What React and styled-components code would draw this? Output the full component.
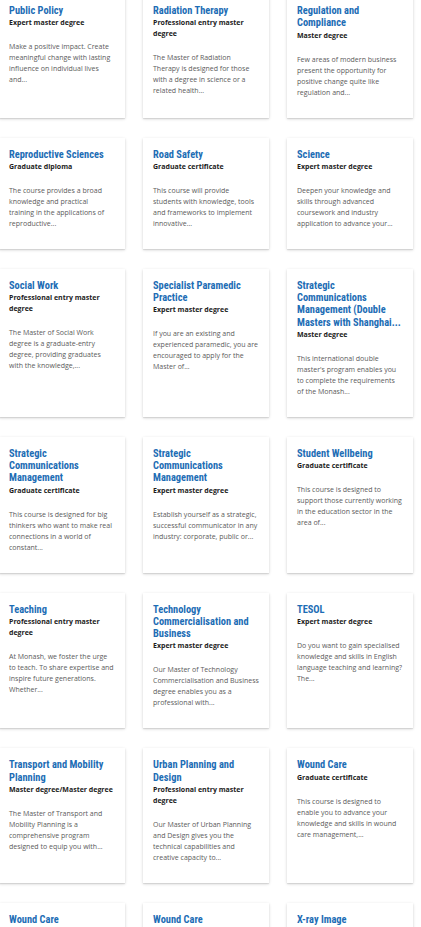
import React from 'react';
import styled, { createGlobalStyle } from 'styled-components';

const courses = [
  { title: 'Public Policy', type: 'Expert master degree', text: 'Make a positive impact. Create meaningful change with lasting influence on individual lives and...' },
  { title: 'Radiation Therapy', type: 'Professional entry master degree', text: 'The Master of Radiation Therapy is designed for those with a degree in science or a related health...' },
  { title: 'Regulation and Compliance', type: 'Master degree', text: 'Few areas of modern business present the opportunity for positive change quite like regulation and...' },
  { title: 'Reproductive Sciences', type: 'Graduate diploma', text: 'The course provides a broad knowledge and practical training in the applications of reproductive...' },
  { title: 'Road Safety', type: 'Graduate certificate', text: 'This course will provide students with knowledge, tools and frameworks to implement innovative...' },
  { title: 'Science', type: 'Expert master degree', text: 'Deepen your knowledge and skills through advanced coursework and industry application to advance your...' },
  { title: 'Social Work', type: 'Professional entry master degree', text: 'The Master of Social Work degree is a graduate-entry degree, providing graduates with the knowledge,...' },
  { title: 'Specialist Paramedic Practice', type: 'Expert master degree', text: 'If you are an existing and experienced paramedic, you are encouraged to apply for the Master of...' },
  { title: 'Strategic Communications Management (Double Masters with Shanghai...', type: 'Master degree', text: "This international double master's program enables you to complete the requirements of the Monash..." },
  { title: 'Strategic Communications Management', type: 'Graduate certificate', text: 'This course is designed for big thinkers who want to make real connections in a world of constant...' },
  { title: 'Strategic Communications Management', type: 'Expert master degree', text: 'Establish yourself as a strategic, successful communicator in any industry: corporate, public or...' },
  { title: 'Student Wellbeing', type: 'Graduate certificate', text: 'This course is designed to support those currently working in the education sector in the area of...' },
  { title: 'Teaching', type: 'Professional entry master degree', text: 'At Monash, we foster the urge to teach. To share expertise and inspire future generations. Whether...' },
  { title: 'Technology Commercialisation and Business', type: 'Expert master degree', text: 'Our Master of Technology Commercialisation and Business degree enables you as a professional with...' },
  { title: 'TESOL', type: 'Expert master degree', text: 'Do you want to gain specialised knowledge and skills in English language teaching and learning? The...' },
  { title: 'Transport and Mobility Planning', type: 'Master degree/Master degree', text: 'The Master of Transport and Mobility Planning is a comprehensive program designed to equip you with...' },
  { title: 'Urban Planning and Design', type: 'Professional entry master degree', text: 'Our Master of Urban Planning and Design gives you the technical capabilities and creative capacity to...' },
  { title: 'Wound Care', type: 'Graduate certificate', text: 'This course is designed to enable you to advance your knowledge and skills in wound care management,...' },
  { title: 'Wound Care', type: 'Graduate diploma', text: 'This course is designed to enable you to advance your knowledge and skills in wound care management,...' },
  { title: 'Wound Care', type: 'Expert master degree', text: 'This course is designed to enable you to advance your knowledge and skills in wound care management,...' },
  { title: 'X-ray Image Interpretation', type: 'Graduate certificate', text: 'This course will develop your skills in the interpretation of x-ray images across a range of...' },
];

const GlobalStyle = createGlobalStyle`
  html, body {
    margin: 0;
    padding: 0;
    background: #ffffff;
  }
  body {
    overflow: hidden;
  }
`;

const Page = styled.div`
  width: 421px;
  height: 927px;
  overflow: hidden;
`;

// the list is scrolled a little, so the first row starts above the fold
const Grid = styled.div`
  display: grid;
  grid-template-columns: repeat(3, 126px);
  column-gap: 18px;
  row-gap: 20px;
  margin: -6px 0 0 -1px;
`;

const Card = styled.article`
  background: #fff;
  padding: 11px 10px 20px;
  box-shadow: 0 1px 3px rgba(0, 0, 0, 0.16), 0 1px 1px rgba(0, 0, 0, 0.08);
`;

const Title = styled.h3`
  margin: 0;
  font-family: "Roboto Condensed", "Liberation Sans Narrow", Roboto, sans-serif;
  font-weight: 700;
  font-size: 10.4px;
  line-height: 12.25px;
  color: #1d6db5;
`;

const Type = styled.div`
  font-family: "Open Sans", sans-serif;
  font-weight: 700;
  font-size: 7px;
  line-height: 11px;
  color: #1c1c1c;
`;

const Text = styled.p`
  margin: 13px 0 0;
  font-family: "Open Sans", sans-serif;
  font-size: 7px;
  line-height: 11px;
  color: #5b5b5b;
`;

const App = () => {
  return (
    <Page>
      <GlobalStyle />
      <Grid>
        {courses.map((c, i) => (
          <Card key={i}>
            <Title>{c.title}</Title>
            <Type>{c.type}</Type>
            <Text>{c.text}</Text>
          </Card>
        ))}
      </Grid>
    </Page>
  );
};

export default App;
